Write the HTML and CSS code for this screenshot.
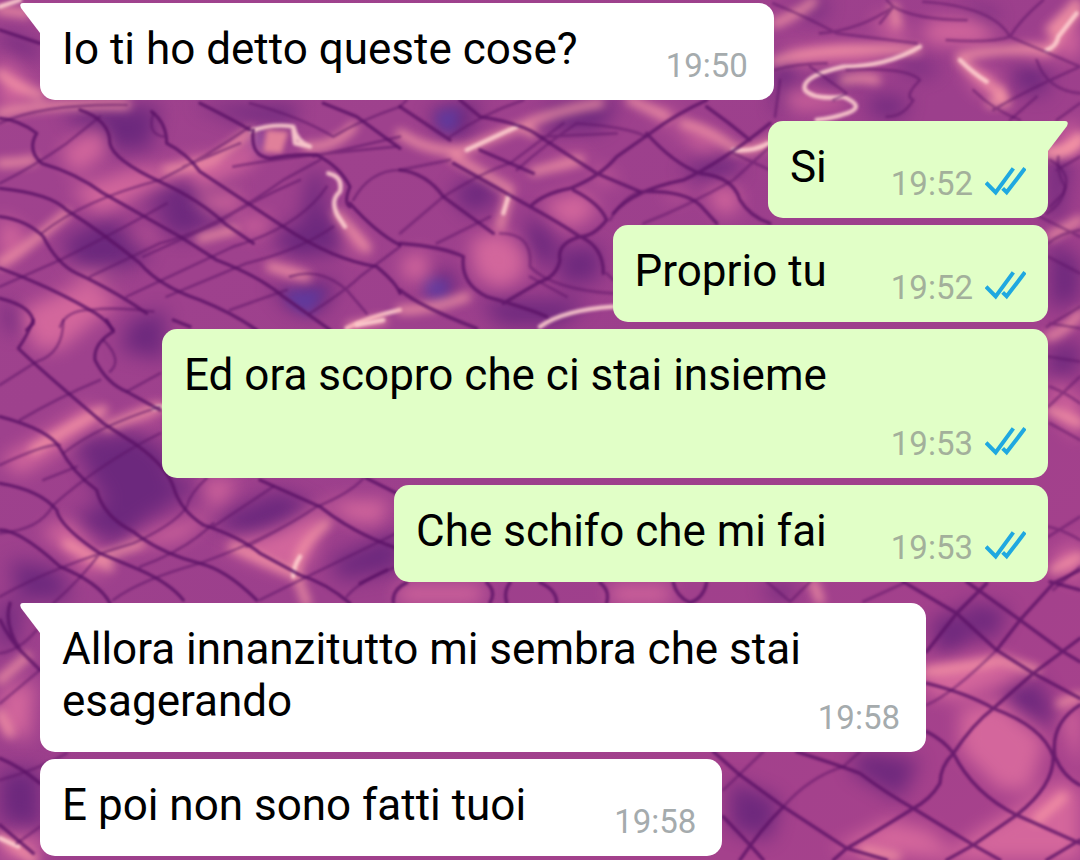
FILE: index.html
```
<!DOCTYPE html>
<html lang="it">
<head>
    <meta charset="UTF-8">
    <meta name="viewport" content="width=device-width, initial-scale=1.0">
    <title>Chat</title>
    <link rel="stylesheet" href="styles.css">
</head>
<body>
    <!-- pool water wallpaper -->
    <svg class="wallpaper" viewBox="0 0 1080 860" preserveAspectRatio="xMidYMid slice" aria-hidden="true">
        <defs>
            <linearGradient id="water" x1="0" y1="0" x2="1" y2="1">
                <stop offset="0" stop-color="#a0438e"/>
                <stop offset="0.5" stop-color="#9c3f8c"/>
                <stop offset="1" stop-color="#a8428c"/>
            </linearGradient>
        </defs>
        <rect width="1080" height="860" fill="url(#water)"/>

        <!-- dark patches -->
        <g class="shade">
            <path d="M0 30L40 45V60L0 45ZM60 110L160 105L150 150L110 150ZM150 215L210 195L235 215L180 240ZM60 240L110 215L150 255L90 290ZM270 235L330 210L350 250L290 260ZM270 285L340 280L320 315L290 310ZM0 300L30 320L10 335ZM310 170L325 175L320 240L300 230ZM130 320L165 310V360L120 350ZM190 105L300 105L290 125L240 120ZM130 200L170 180L240 185L200 210Z"/>
            <path d="M430 110L480 100L470 135L440 140ZM450 190L490 170L500 200L470 215ZM530 210L560 245L545 270L525 245ZM550 105L620 100L600 130L540 130ZM560 250L600 245L600 280L560 285ZM430 270L460 275L450 300L425 290ZM680 170L730 150L740 175L700 180ZM480 300L590 300L560 325H500Z"/>
            <path d="M810 70L860 70L850 88L815 85ZM870 95L910 100L900 118L870 115ZM1015 60L1050 70L1045 95L1015 90ZM790 5L830 0L820 20ZM900 60L940 65L930 75L900 72ZM775 60L800 55L790 110H775ZM1050 150L1070 160L1060 220L1048 220ZM1050 240L1080 260V300L1050 310ZM1048 350L1080 340V370L1048 380ZM960 5L1000 15L985 30Z"/>
            <path d="M80 445L130 430L165 450L180 500L130 530L90 480ZM70 520L110 500L140 525L120 545ZM210 520L280 490L320 510L250 540ZM330 560L400 530V570L340 580ZM170 480L200 480L190 500ZM10 560L60 570L70 600H20ZM0 600L20 605L15 645L0 650ZM60 440L100 430L90 460Z"/>
            <path d="M965 600L1010 610L990 645L970 620ZM1000 685L1040 680L1060 730L1010 710ZM930 620L960 610L980 635L940 660ZM860 750L920 760L900 800L850 770ZM730 780L780 800L770 840L730 830ZM760 585L800 585L780 605ZM0 770L40 770V830L0 820Z"/>
        </g>

        <!-- blue tints -->
        <path class="blue" d="M435 112L460 108L455 132L440 130ZM425 278L450 280L445 300L425 296ZM252 132L264 132L262 152L252 150ZM285 290L325 290L310 315L290 305Z"/>

        <!-- pink patches -->
        <g class="glow">
            <path d="M0 55L40 95L0 110ZM60 150L100 125L110 150L75 175ZM70 190L130 170L200 165L100 215ZM180 160L230 155L270 130L250 165L200 190ZM0 215L30 235L0 270ZM190 195L240 190L240 210L210 215ZM230 225L270 215L265 235L240 232ZM270 260L310 275L290 280ZM20 310L90 280L120 300L60 350L30 340ZM340 215L370 250L350 255ZM120 240L160 230L150 240ZM60 270L130 270L90 285Z"/>
            <path d="M470 240L500 230L525 250L525 275L500 290L475 275ZM540 205L580 190L600 210L570 230ZM705 190L735 185L740 210L720 215ZM400 130L450 150L500 185L520 190L450 145ZM590 165L620 180L600 185ZM670 125L700 130L735 150L700 150ZM640 105L680 115L670 125ZM545 165L590 150L570 165ZM400 260L425 250L430 280L405 280ZM660 195L690 190L680 200Z"/>
            <path d="M870 20L890 15L910 35L900 45ZM930 20L975 18L1000 35L980 45L940 45L920 40ZM780 50L840 45L900 50L860 65L790 65ZM960 60L1000 80L1000 100L975 90ZM1000 55L1040 45L1060 60ZM1048 30L1080 20V60L1060 55ZM780 90L840 95L850 105L790 110ZM1060 130L1080 120V155L1055 155Z"/>
            <path d="M0 460L50 430L90 405L105 420L70 445L20 475ZM40 530L70 520L110 570L90 575ZM220 545L280 530L330 500L310 560L295 575L250 560ZM110 550L160 530L220 510L180 540ZM110 425L160 405L155 420ZM330 500L390 500L380 525L345 520ZM60 325L50 350L30 350ZM200 480H240L215 510Z"/>
            <path d="M925 665L1000 655L1030 675L985 690L960 700L925 695ZM960 710L1000 700L1045 740L1030 790L1000 790L960 750ZM1030 800L1060 780L1080 790V860H940L980 830ZM1060 720L1080 700V770ZM830 850L890 820L930 830L960 860ZM400 585H485L480 603H396ZM610 585H670V603H612ZM0 690L35 680L30 740L0 730ZM0 840L40 835L40 860H0ZM1048 380L1080 400V440L1060 420ZM1048 560L1080 540V585Z"/>
        </g>

        <!-- reflected light -->
        <g class="light">
            <g transform="scale(0.3333)">
                <path class="wide" d="M0 790Q60 760 200 640M0 220Q50 265 120 285M0 490Q50 490 100 480M500 510Q580 500 640 480Q690 440 750 395M810 800L920 830M1010 640L1100 745M600 715L700 690M80 40L0 30M0 340Q100 310 380 315M920 440Q1000 445 1060 380"/>
                <path class="bright" d="M755 392Q820 370 880 380Q890 425 930 440M985 520Q1030 530 1020 575Q990 600 1012 645L1035 680M1040 985Q1110 950 1200 930M880 390L885 430L930 440M0 20L60 0"/>
                <path class="patch" d="M800 390L865 395L845 460L790 455Z"/>
            </g>
            <g transform="translate(400 90) scale(0.3333)">
                <path class="wide" d="M0 130Q90 190 190 180Q260 150 360 110L400 130M400 245L540 210M690 30L800 80M850 100Q930 120 1010 180Q1080 180 1110 155M380 100Q480 60 600 40M160 200L330 300M0 660Q100 660 200 620M325 320L300 410"/>
                <path class="bright" d="M325 320L310 370M420 710Q490 660 640 650M200 180L350 110M1000 180Q1060 185 1105 160"/>
            </g>
            <g transform="translate(760 0) scale(0.3333)">
                <path class="wide" d="M45 185Q170 140 470 150M45 70Q100 50 160 5M600 170Q740 140 870 150M400 20L410 70M870 460Q920 460 960 420M250 240Q310 230 350 240M600 180Q640 220 680 245L740 310M850 155Q890 140 895 100L960 30M870 90L950 5"/>
                <path class="bright" d="M480 140Q380 200 250 200Q120 230 135 270Q160 300 250 290Q320 320 260 340Q220 355 170 360M600 180Q640 220 680 245M860 150Q890 140 895 110L950 40"/>
            </g>
            <g transform="translate(0 320) scale(0.3333)">
                <path class="wide" d="M100 390Q210 320 310 270M890 750Q890 680 980 610M700 680L890 765L920 850M200 670L330 740M310 710L420 670M320 320L480 260M1050 20L1150 0"/>
                <path class="bright" d="M880 770Q880 740 900 710M1070 15L1150 0M460 265L485 260"/>
            </g>
            <g transform="translate(700 570) scale(0.3333)">
                <path class="wide" d="M680 305Q820 290 900 270Q960 290 1010 300M1010 750L1090 680M490 840L590 860M1080 400L1140 380M340 40L360 90"/>
            </g>
            <g transform="translate(0 590) scale(0.3333)">
                <path class="wide" d="M0 270L80 200M0 740L60 780L100 810M0 370L30 430"/>
                <path class="bright" d="M0 745L55 770"/>
            </g>
            <g transform="translate(990 90) scale(0.3333)">
                <path class="wide" d="M175 740Q220 730 270 670M180 440L270 390M180 960L270 1000M190 1440L270 1400M170 185Q240 190 270 140M0 40Q50 40 30 0"/>
            </g>
        </g>

        <!-- tile lines -->
        <g class="tiles">
            <g transform="scale(0.3333)">
                <path class="main" d="M0 90L120 130M0 355Q60 360 110 400Q80 450 125 490Q230 520 310 580L540 710L650 780Q780 830 850 890L990 990M240 330Q330 360 330 430Q340 480 480 545Q600 600 680 675L760 730M455 335Q500 370 500 430Q560 460 600 515L850 680Q1000 780 1130 800Q1190 850 1200 880M0 565Q150 580 200 630Q310 700 420 790Q480 860 600 900Q700 940 770 990M0 650Q80 660 130 710Q170 790 230 820Q340 870 440 940M600 310Q700 360 750 390M970 310L1070 350L1200 445M0 805Q150 860 270 930Q310 950 340 990M0 895Q100 920 100 970L80 990M1050 610Q1130 700 1200 735M760 390Q750 470 810 475Q880 460 950 465Q1020 500 1050 560Q1030 610 1050 620"/>
                <path class="thin" d="M0 550Q100 500 200 430L300 350M0 370Q130 310 380 315M125 700Q250 600 480 540Q620 470 750 380M0 860L180 780Q380 680 500 610M270 830L480 730Q640 690 850 540L960 480M430 770L650 670Q760 600 900 540M380 890L700 740Q900 680 980 560M500 890L740 790Q900 750 1000 680M690 930L860 870M460 340Q440 400 490 410M750 310Q900 350 1000 410M1000 410Q1080 360 1200 320M940 470L1200 410M1060 600Q1110 510 1200 510M870 830Q960 800 1040 870L1100 940M930 940Q1040 870 1080 830L1200 740M550 500L720 430M180 980Q200 930 270 930Q350 920 460 935M700 500Q860 470 1190 440"/>
            </g>
            <g transform="translate(400 90) scale(0.3333)">
                <path class="main" d="M0 50L150 150M180 30L240 80Q370 100 420 140L590 250L720 305Q850 300 900 345L950 400M240 180L400 250M0 240Q80 250 130 320L280 430M160 220L390 350Q480 400 540 440Q610 470 610 550M390 350Q430 310 510 295Q600 260 650 200L750 130Q830 70 920 30M740 130Q820 220 900 250Q1000 260 1020 330Q1050 380 1110 400M0 460Q130 470 190 500Q180 580 260 620Q400 660 440 680M920 50Q990 100 1050 150M640 370Q700 300 850 270Q960 220 1110 100M520 300Q600 340 620 390Q580 440 540 440Q470 460 480 510Q470 560 420 575L310 640M0 600Q60 650 230 715"/>
                <path class="thin" d="M150 140Q250 70 370 30M0 430L130 320Q260 240 330 220L490 100M350 240Q440 160 530 100Q680 110 740 140M420 140L650 130M300 430Q400 430 390 530Q460 600 640 610M630 390Q670 320 720 305M730 400Q860 350 1000 270L1110 170M110 460L270 380M20 30L0 50M620 550L640 570M0 240L150 210M1000 190L1110 240M390 560L500 620"/>
            </g>
            <g transform="translate(760 0) scale(0.3333)">
                <path class="thin" d="M40 10Q140 50 230 100L470 130M180 100Q300 90 400 20Q470 60 620 60M490 5Q700 20 750 110Q780 60 850 0M560 120Q690 130 750 110L960 200M260 210Q440 200 480 240Q430 290 460 300Q430 350 380 350M45 210Q110 190 200 190M640 270Q700 330 780 360M700 330Q800 270 960 200M830 180Q860 270 960 280M150 200L260 280L220 300M890 360L960 310M380 0L400 20L360 70M60 240L45 350M870 480Q940 520 910 580L870 620"/>
            </g>
            <g transform="translate(0 320) scale(0.3333)">
                <path class="main" d="M100 0Q80 50 55 85Q90 120 200 215L310 310L410 375Q500 440 520 500Q540 570 610 615Q720 650 780 700L900 765Q980 790 1050 850M0 290Q150 330 180 385Q220 460 290 510Q310 590 400 635Q480 700 600 730Q680 750 770 840M320 0L340 35Q280 70 285 120Q320 190 380 215L480 270M0 630Q60 630 180 740Q300 790 330 850M780 480Q870 520 960 560Q1060 640 1190 685M0 490Q120 510 170 570Q180 620 300 700L420 750Q510 790 550 840M1100 475L1190 520M520 0L570 20"/>
                <path class="thin" d="M190 0Q190 100 110 125L0 195M60 300Q180 230 300 180M0 435Q140 370 180 375M190 400Q290 320 480 260M0 640Q120 630 160 555Q300 430 480 340M130 480L230 440M0 830Q160 740 400 670Q530 610 560 560Q570 520 620 475M340 840Q420 780 600 730Q820 650 950 560Q1050 520 1090 475M640 620L820 500M160 850Q250 770 300 700M420 740Q560 690 640 610M780 840Q900 780 1190 640M310 60Q370 120 330 155M380 215L480 160M1040 830Q1080 780 1190 740M740 680Q860 620 950 560"/>
            </g>
            <g transform="translate(360 570) scale(0.3333)">
                <path class="main" d="M100 98Q95 60 140 38M380 38Q410 65 390 98M440 98Q430 65 450 38M540 38Q590 60 590 98M720 38Q750 60 740 98M940 38Q950 80 990 98M1040 38Q1030 85 990 98M0 40L80 0"/>
            </g>
            <g transform="translate(700 570) scale(0.3333)">
                <path class="main" d="M610 35L770 130L890 240L1000 310L1140 385M680 245L770 130L860 40M800 35L960 150L1090 245L1140 275M1140 0L1060 40L960 150L890 240M680 340Q800 370 880 415Q1030 470 1060 560Q1060 650 950 735L820 825L740 870M680 485Q730 510 760 550Q820 670 950 735L1140 820M760 550Q720 590 720 640Q690 690 640 715Q520 790 440 835L400 870M290 545Q430 590 480 610Q560 670 640 715L820 825L900 870M1140 405Q1050 460 1065 560Q1090 620 1140 645M880 415Q820 460 760 550M40 545L120 615L250 710L440 835L560 870M250 710Q180 780 120 870M70 740L150 825L190 870M1140 205L1000 310L880 415M1050 35L1140 60M1140 810L1040 870"/>
                <path class="thin" d="M490 95L610 40M680 405Q760 370 890 240M70 660L190 545M250 710Q330 620 430 590L480 545M200 35L270 95L330 35"/>
            </g>
            <g transform="translate(0 590) scale(0.3333)">
                <path class="main" d="M0 90Q30 150 60 180L120 240M30 40Q10 100 60 180M0 505Q60 530 120 580M0 705L100 790"/>
                <path class="thin" d="M0 340Q60 290 120 240M0 190Q60 180 110 120M0 570Q110 540 200 490M50 760L120 710"/>
            </g>
            <g transform="translate(990 90) scale(0.3333)">
                <path class="thin" d="M205 200Q200 250 225 290Q220 340 170 370M270 200L200 240M175 500L270 550M175 460Q210 430 270 420M170 710L270 650M175 800L270 815M180 890Q230 910 270 940M175 950L270 860M180 1000L270 1050M175 1310Q220 1320 270 1350M175 1340L270 1280M190 1500L270 1430M150 380L270 440M60 90L140 20M180 700L270 715"/>
            </g>
        </g>
    </svg>

    <main class="chat">
        <div class="message in first">
            <svg class="tail" viewBox="0 0 20 30" aria-hidden="true"><path d="M20 0H3Q-1 0 1 5L20 30Z"/></svg>
            <p class="text">Io ti ho detto queste cose?</p>
            <div class="meta"><time>19:50</time></div>
        </div>

        <div class="message out first">
            <svg class="tail" viewBox="0 0 20 30" aria-hidden="true"><path d="M0 0H17Q21 0 19 5L0 30Z"/></svg>
            <p class="text">Si</p>
            <div class="meta">
                <time>19:52</time>
                <svg class="ticks" viewBox="345 42 123 120" role="img" aria-label="Letto"><path d="M348 98L377 127L430 55M398 115L410 127L465 55"/></svg>
            </div>
        </div>
        <div class="message out">
            <p class="text">Proprio tu</p>
            <div class="meta">
                <time>19:52</time>
                <svg class="ticks" viewBox="345 42 123 120" role="img" aria-label="Letto"><path d="M348 98L377 127L430 55M398 115L410 127L465 55"/></svg>
            </div>
        </div>
        <div class="message out tall">
            <p class="text">Ed ora scopro che ci stai insieme</p>
            <div class="meta">
                <time>19:53</time>
                <svg class="ticks" viewBox="345 42 123 120" role="img" aria-label="Letto"><path d="M348 98L377 127L430 55M398 115L410 127L465 55"/></svg>
            </div>
        </div>
        <div class="message out">
            <p class="text">Che schifo che mi fai</p>
            <div class="meta">
                <time>19:53</time>
                <svg class="ticks" viewBox="345 42 123 120" role="img" aria-label="Letto"><path d="M348 98L377 127L430 55M398 115L410 127L465 55"/></svg>
            </div>
        </div>

        <div class="message in first long">
            <svg class="tail" viewBox="0 0 20 30" aria-hidden="true"><path d="M20 0H3Q-1 0 1 5L20 30Z"/></svg>
            <p class="text">Allora innanzitutto mi sembra che stai esagerando</p>
            <div class="meta"><time>19:58</time></div>
        </div>
        <div class="message in">
            <p class="text">E poi non sono fatti tuoi</p>
            <div class="meta"><time>19:58</time></div>
        </div>
    </main>
</body>
</html>
```
FILE: styles.css
```
* {
    box-sizing: border-box;
}
body {
    margin: 0;
    background-color: #9c3f8c;
    font-family: Roboto, 'Liberation Sans', sans-serif;
    color: #000;
}

/* wallpaper */
.wallpaper {
    position: fixed;
    top: 0;
    left: 0;
    width: 100%;
    height: 100%;
    z-index: -1;
}
.shade {
    fill: #5c2078;
    opacity: 0.75;
    filter: blur(10px);
}
.blue {
    fill: #5a3fa8;
    opacity: 0.7;
    filter: blur(6px);
}
.glow {
    fill: #e070a0;
    opacity: 0.8;
    filter: blur(9px);
}
.light {
    fill: none;
    stroke-linecap: round;
    stroke-linejoin: round;
}
.light .wide {
    stroke: #ffa0a8;
    stroke-width: 26;
    opacity: 0.75;
    filter: blur(14px);
}
.light .bright {
    stroke: #ffd0d0;
    stroke-width: 13;
    opacity: 0.9;
    filter: blur(5px);
}
.light .patch {
    fill: #e0809a;
    filter: blur(8px);
}
.tiles {
    fill: none;
    stroke: #5a1265;
    stroke-linecap: round;
    stroke-linejoin: round;
    filter: blur(1px);
}
.tiles .main {
    stroke-width: 10;
    opacity: 0.8;
}
.tiles .thin {
    stroke-width: 8;
    opacity: 0.5;
}

/* messages */
.chat {
    display: flex;
    flex-direction: column;
    gap: 7px;
    padding: 3px 32px 4px 40px;
}
.message {
    position: relative;
    display: flex;
    justify-content: space-between;
    max-width: 886px;
    padding: 20px 22px 14px;
    border-radius: 15px;
}
.message.in {
    align-self: flex-start;
    gap: 88px;
    padding-right: 26px;
    background-color: #fff;
    fill: #fff;
}
.message.out {
    align-self: flex-end;
    gap: 64px;
    background-color: #e1ffc7;
    fill: #e1ffc7;
}
.message.first {
    margin-top: 14px;
}
.message.first:first-child {
    margin-top: 0;
}
.in.first {
    border-top-left-radius: 0;
}
.out.first {
    border-top-right-radius: 0;
}
.message.tall {
    min-height: 149px;
}
.message.long {
    width: 100%;
    gap: 0;
}
.tail {
    position: absolute;
    top: 0;
    width: 20px;
    height: 30px;
}
.in .tail {
    right: 100%;
}
.out .tail {
    left: 100%;
}
.text {
    margin: 0;
    padding-bottom: 11px;
    font-size: 44px;
    line-height: 52px;
}
.meta {
    display: flex;
    align-self: flex-end;
    gap: 12px;
    font-size: 33px;
    line-height: 40px;
    color: #a5abad;
}
.out .meta {
    color: #a3b09b;
}
.ticks {
    width: 41px;
    height: 40px;
    fill: none;
    stroke: #1fa8e0;
    stroke-width: 12;
}
```
